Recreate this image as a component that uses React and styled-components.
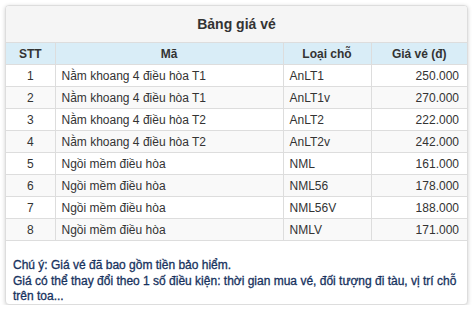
import React from "react";
import styled, { createGlobalStyle } from "styled-components";

const Global = createGlobalStyle`
  html, body { margin: 0; padding: 0; background: #fff; }
  body { font-family: "Liberation Sans", Arial, sans-serif; font-size: 12px; color: #333; }
`;

const Page = styled.div`
  padding: 5px 0 0 5px;
`;

const Panel = styled.div`
  width: 461px;
  border: 1px solid #ddd;
  border-radius: 4px;
  background: #fff;
  box-shadow: 0 1px 4px rgba(0, 0, 0, 0.18);
  overflow: hidden;
`;

const Heading = styled.div`
  height: 36px;
  display: flex;
  align-items: center;
  justify-content: center;
  background: #f5f5f5;
  border-bottom: 1px solid #ddd;
  font-size: 14px;
  font-weight: bold;
  color: #333;
`;

const Table = styled.table`
  width: 100%;
  border-collapse: collapse;
  table-layout: fixed;
`;

const Th = styled.th`
  height: 21px;
  padding: 0;
  background: #d9edf7;
  border-left: 1px solid #ddd;
  border-bottom: 1px solid #ddd;
  font-weight: bold;
  text-align: center;
  color: #333;
  &:first-child { border-left: none; }
`;

const Row = styled.tr`
  background: ${(p) => (p.$striped ? "#f9f9f9" : "#fff")};
`;

const Td = styled.td`
  height: 21px;
  padding: 0 ${(p) => (p.$align === "right" ? "8px" : "6px")};
  border-left: 1px solid #ddd;
  border-bottom: 1px solid #ddd;
  text-align: ${(p) => p.$align || "left"};
  color: #333;
  white-space: nowrap;
  &:first-child { border-left: none; }
`;

const Note = styled.div`
  box-sizing: border-box;
  height: 63px;
  padding: 17px 7px 0 7px;
  line-height: 15.5px;
  color: #17325e;
  -webkit-text-stroke: 0.3px #17325e;
`;

const rows = [
  ["1", "Nằm khoang 4 điều hòa T1", "AnLT1", "250.000"],
  ["2", "Nằm khoang 4 điều hòa T1", "AnLT1v", "270.000"],
  ["3", "Nằm khoang 4 điều hòa T2", "AnLT2", "222.000"],
  ["4", "Nằm khoang 4 điều hòa T2", "AnLT2v", "242.000"],
  ["5", "Ngồi mềm điều hòa", "NML", "161.000"],
  ["6", "Ngồi mềm điều hòa", "NML56", "178.000"],
  ["7", "Ngồi mềm điều hòa", "NML56V", "188.000"],
  ["8", "Ngồi mềm điều hòa", "NMLV", "171.000"],
];

export default function App() {
  return (
    <Page>
      <Global />
      <Panel>
        <Heading>Bảng giá vé</Heading>
        <Table>
          <colgroup>
            <col style={{ width: 49 }} />
            <col style={{ width: 228 }} />
            <col style={{ width: 88 }} />
            <col style={{ width: 96 }} />
          </colgroup>
          <thead>
            <tr>
              <Th>STT</Th>
              <Th>Mã</Th>
              <Th>Loại chỗ</Th>
              <Th>Giá vé (đ)</Th>
            </tr>
          </thead>
          <tbody>
            {rows.map((r, i) => (
              <Row key={r[0]} $striped={i % 2 === 1}>
                <Td $align="center">{r[0]}</Td>
                <Td>{r[1]}</Td>
                <Td>{r[2]}</Td>
                <Td $align="right">{r[3]}</Td>
              </Row>
            ))}
          </tbody>
        </Table>
        <Note>
          Chú ý: Giá vé đã bao gồm tiền bảo hiểm.
          <br />
          Giá có thể thay đổi theo 1 số điều kiện: thời gian mua vé, đối tượng đi tàu, vị trí chỗ trên toa...
        </Note>
      </Panel>
    </Page>
  );
}
